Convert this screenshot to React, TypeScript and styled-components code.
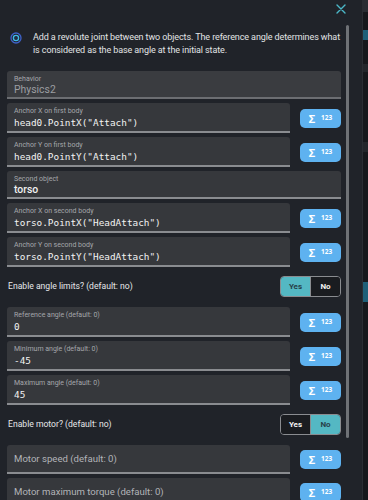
import React from 'react';
import styled, { createGlobalStyle } from 'styled-components';

const GlobalStyle = createGlobalStyle`
  html, body {
    margin: 0;
    padding: 0;
    background: #202329;
  }
  body {
    font-family: Roboto, 'Noto Sans', 'Liberation Sans', sans-serif;
    overflow: hidden;
  }
`;

const Screen = styled.div`
  display: flex;
  width: 368px;
  height: 500px;
  overflow: hidden;
  background: #202329;
`;

const Dialog = styled.div`
  position: relative;
  flex: 1;
  display: flex;
  flex-direction: column;
`;

const SideStrip = styled.div`
  width: 5px;
  background: #16181c;
  border-left: 1px solid #2a2d33;
  display: flex;
  flex-direction: column;
`;

const StripBlock = styled.div<{ $h: number; $c: string; $mt: number }>`
  height: ${(p) => p.$h}px;
  margin-top: ${(p) => p.$mt}px;
  background: ${(p) => p.$c};
`;

const CloseButton = styled.div`
  position: absolute;
  top: 0;
  right: 15px;
  width: 12px;
  height: 12px;
  color: #4bb8c8;
`;

const Body = styled.div`
  display: flex;
  flex: 1;
  padding-top: 25px;
`;

const Content = styled.div`
  width: 334px;
  padding-left: 7px;
  display: flex;
  flex-direction: column;
`;

const ScrollTrack = styled.div`
  width: 3px;
  margin-left: 5px;
  height: 413px;
  background: #6f7276;
  border-radius: 2px;
`;

const Description = styled.div`
  display: flex;
  align-items: flex-start;
  gap: 11px;
  padding: 6px 0 0 3px;
  margin-bottom: 14px;
`;

const DescText = styled.p`
  flex: 1;
  margin: 0;
  font-size: 9px;
  line-height: 13px;
  color: #e2e3e5;
  letter-spacing: -0.1px;
`;

const Row = styled.div`
  display: flex;
  align-items: center;
  gap: 10px;
  margin-bottom: 4px;
`;

const Field = styled.div<{ $disabled?: boolean }>`
  flex: 1;
  min-width: 0;
  background: ${(p) => (p.$disabled ? '#3a3c40' : '#36383c')};
  border-bottom: 2px solid ${(p) => (p.$disabled ? '#6c6e72' : '#8a8c90')};
  border-radius: 3px 3px 0 0;
  padding: 3px 7px 1px;
  display: flex;
  flex-direction: column;
`;

const Label = styled.span`
  font-size: 7px;
  line-height: 10px;
  color: #a5a7ab;
`;

const MonoValue = styled.span`
  font-family: 'DejaVu Sans Mono', 'Liberation Mono', monospace;
  font-size: 9.4px;
  line-height: 14px;
  color: #f2f2f2;
`;

const TextValue = styled.span<{ $muted?: boolean }>`
  font-size: 10.4px;
  line-height: 12px;
  color: ${(p) => (p.$muted ? '#9c9ea2' : '#f2f2f2')};
  font-weight: ${(p) => (p.$muted ? 400 : 500)};
`;

const Placeholder = styled.div`
  flex: 1;
  background: #36383c;
  border-bottom: 2px solid #8a8c90;
  border-radius: 3px 3px 0 0;
  height: 27px;
  padding: 0 7px;
  display: flex;
  align-items: center;
  font-size: 9.6px;
  color: #b2b4b8;
`;

const ExprButton = styled.button`
  width: 41px;
  height: 19px;
  flex-shrink: 0;
  border: none;
  border-radius: 5px;
  background: #5eb2f0;
  color: #ffffff;
  display: flex;
  align-items: center;
  justify-content: center;
  gap: 6px;
  padding: 0;
  font-family: 'Noto Sans', sans-serif;
`;

const Sigma = styled.span`
  font-size: 11px;
  font-weight: 700;
  line-height: 1;
`;

const Digits = styled.span`
  font-size: 6.5px;
  font-weight: 700;
  line-height: 1;
`;

const ToggleRow = styled.div`
  display: flex;
  align-items: center;
  justify-content: space-between;
  margin: 5px 0 11px;
  height: 20px;
`;

const ToggleLabel = styled.span`
  font-size: 8.6px;
  color: #e6e7e9;
  padding-left: 1px;
`;

const Toggle = styled.div`
  display: flex;
  width: 59px;
  height: 19px;
  border: 1px solid #8a8c90;
  border-radius: 4px;
  overflow: hidden;
`;

const ToggleOption = styled.div<{ $on: boolean }>`
  flex: 1;
  display: flex;
  align-items: center;
  justify-content: center;
  font-size: 8px;
  font-weight: 700;
  background: ${(p) => (p.$on ? '#54b8c3' : '#1a1c20')};
  color: ${(p) => (p.$on ? '#27414a' : '#f2f2f2')};
  & + & {
    border-left: 1px solid #8a8c90;
  }
`;

const JointIcon = () => (
  <svg width="12" height="12" viewBox="0 0 12 12" style={{ marginTop: 1, flexShrink: 0 }}>
    <circle cx="6" cy="6" r="5" fill="none" stroke="#3e62c9" strokeWidth="1.3" />
    <circle cx="6" cy="6" r="2.6" fill="none" stroke="#3fb8e8" strokeWidth="1.4" />
    <circle cx="6" cy="6" r="1" fill="#1e2f55" />
  </svg>
);

const CloseIcon = () => (
  <svg width="12" height="12" viewBox="0 0 12 12">
    <path d="M2 2 L10 10 M10 2 L2 10" stroke="currentColor" strokeWidth="1.4" strokeLinecap="round" />
  </svg>
);

const Expr = () => (
  <ExprButton>
    <Sigma>Σ</Sigma>
    <Digits>123</Digits>
  </ExprButton>
);

interface ExprFieldProps {
  label: string;
  value: string;
}

const ExprField: React.FC<ExprFieldProps> = ({ label, value }) => (
  <Row>
    <Field>
      <Label>{label}</Label>
      <MonoValue>{value}</MonoValue>
    </Field>
    <Expr />
  </Row>
);

interface YesNoProps {
  label: string;
  value: boolean;
}

const YesNo: React.FC<YesNoProps> = ({ label, value }) => (
  <ToggleRow>
    <ToggleLabel>{label}</ToggleLabel>
    <Toggle>
      <ToggleOption $on={value}>Yes</ToggleOption>
      <ToggleOption $on={!value}>No</ToggleOption>
    </Toggle>
  </ToggleRow>
);

const App: React.FC = () => (
  <>
    <GlobalStyle />
    <Screen>
      <Dialog>
        <CloseButton>
          <CloseIcon />
        </CloseButton>
        <Body>
          <Content>
            <Description>
              <JointIcon />
              <DescText>
                Add a revolute joint between two objects. The reference angle determines what is
                considered as the base angle at the initial state.
              </DescText>
            </Description>
            <Row>
              <Field $disabled>
                <Label>Behavior</Label>
                <TextValue $muted>Physics2</TextValue>
              </Field>
            </Row>
            <ExprField label="Anchor X on first body" value={'head0.PointX("Attach")'} />
            <ExprField label="Anchor Y on first body" value={'head0.PointY("Attach")'} />
            <Row>
              <Field>
                <Label>Second object</Label>
                <TextValue>torso</TextValue>
              </Field>
            </Row>
            <ExprField label="Anchor X on second body" value={'torso.PointX("HeadAttach")'} />
            <ExprField label="Anchor Y on second body" value={'torso.PointY("HeadAttach")'} />
            <YesNo label="Enable angle limits? (default: no)" value />
            <ExprField label="Reference angle (default: 0)" value="0" />
            <ExprField label="Minimum angle (default: 0)" value="-45" />
            <ExprField label="Maximum angle (default: 0)" value="45" />
            <YesNo label="Enable motor? (default: no)" value={false} />
            <Row>
              <Placeholder>Motor speed (default: 0)</Placeholder>
              <Expr />
            </Row>
            <Row>
              <Placeholder>Motor maximum torque (default: 0)</Placeholder>
              <Expr />
            </Row>
          </Content>
          <ScrollTrack />
        </Body>
      </Dialog>
      <SideStrip>
        <StripBlock $mt={0} $h={12} $c="#2a2d33" />
        <StripBlock $mt={18} $h={10} $c="#1f5f78" />
        <StripBlock $mt={24} $h={8} $c="#23262b" />
        <StripBlock $mt={70} $h={10} $c="#23262b" />
        <StripBlock $mt={130} $h={20} $c="#1f5f78" />
      </SideStrip>
    </Screen>
  </>
);

export default App;
